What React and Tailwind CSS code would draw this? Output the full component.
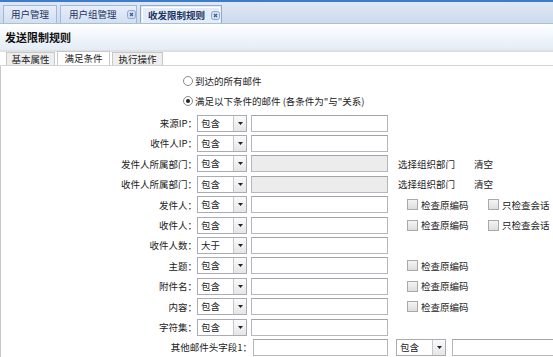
import React from "react";

const rows = [
  { label: "来源IP：", op: "包含" },
  { label: "收件人IP：", op: "包含" },
  { label: "发件人所属部门：", op: "包含", dept: true },
  { label: "收件人所属部门：", op: "包含", dept: true },
  { label: "发件人：", op: "包含", check: true, session: true },
  { label: "收件人：", op: "包含", check: true, session: true },
  { label: "收件人数：", op: "大于" },
  { label: "主题：", op: "包含", check: true },
  { label: "附件名：", op: "包含", check: true },
  { label: "内容：", op: "包含", check: true },
  { label: "字符集：", op: "包含" },
];

function CloseIcon() {
  return (
    <svg width="9" height="9" viewBox="0 0 9 9" className="shrink-0">
      <rect x="0.5" y="0.5" width="8" height="8" rx="2" fill="#d3e0f2" stroke="#8ba7cf" />
      <path d="M3 3 L6 6 M6 3 L3 6" stroke="#3d5f96" strokeWidth="1.2" />
    </svg>
  );
}

function Select({ value }) {
  return (
    <div className="flex h-[17px] w-[50px] shrink-0 border border-[#a9adb3] bg-white">
      <div className="flex-1 pl-[3px] leading-[15px]">{value}</div>
      <div className="flex w-[13px] items-center justify-center border-l border-[#c4c7cc] bg-gradient-to-b from-[#fafafa] to-[#e6e6e6]">
        <svg width="5" height="3" viewBox="0 0 5 3">
          <path d="M0 0 H5 L2.5 3 Z" fill="#222" />
        </svg>
      </div>
    </div>
  );
}

function Input({ disabled, w = "w-[137px]" }) {
  return (
    <div
      className={`h-[17px] ${w} shrink-0 border border-[#b4b7bd] border-t-[#a0a3a8] ${
        disabled ? "bg-[#ececec]" : "bg-white"
      }`}
    />
  );
}

function Checkbox({ text }) {
  return (
    <div className="flex items-center gap-[3px] whitespace-nowrap">
      <div className="h-[11px] w-[11px] border border-[#a9a9a9] bg-gradient-to-b from-[#f4f4f4] to-[#dedede]" />
      <span>{text}</span>
    </div>
  );
}

function Radio({ checked, text }) {
  return (
    <div className="flex h-[20px] items-center pl-[182px] whitespace-nowrap">
      <div className="flex h-[10px] w-[10px] items-center justify-center rounded-full border border-[#8a8a8a] bg-white">
        {checked && <div className="h-[4px] w-[4px] rounded-full bg-[#222]" />}
      </div>
      <span className="ml-[2px]">{text}</span>
    </div>
  );
}

export default function App() {
  return (
    <div className="h-[357px] w-[553px] overflow-hidden whitespace-nowrap bg-white font-['Noto_Sans_CJK_SC',sans-serif] text-[9.5px] text-[#222]">
      {/* top tab bar */}
      <div className="flex h-[24px] items-end gap-[3px] border-t-2 border-b border-t-[#3b7ccc] border-b-[#a8bfdd] bg-gradient-to-b from-[#dfe8f5] to-[#cddbee] pl-[3px]">
        <div className="flex h-[18px] w-[54px] items-center justify-center border border-b-0 border-[#a3b9d7] bg-gradient-to-b from-[#e6eef9] to-[#d3dff0] text-[#1d3563]">
          用户管理
        </div>
        <div className="flex h-[18px] w-[77px] items-center gap-[10px] border border-b-0 border-[#a3b9d7] bg-gradient-to-b from-[#e6eef9] to-[#d3dff0] pl-[8px] text-[#1d3563]">
          <span>用户组管理</span>
          <CloseIcon />
        </div>
        <div className="flex h-[18px] w-[82px] items-center border border-b-0 border-[#8fa9cf] bg-[#e4ecf8] p-[1px]">
          <div className="flex h-full w-full items-center gap-[6px] border border-b-0 border-white pl-[5px] font-bold text-[#1d3563]">
            <span>收发限制规则</span>
            <CloseIcon />
          </div>
        </div>
      </div>

      {/* header */}
      <div className="flex h-[28px] items-center border-b-2 border-[#e0e0e0] bg-gradient-to-b from-white to-[#e3ecf7] px-[5px] text-[11px] font-bold text-[#111]">
        发送限制规则
      </div>

      {/* sub tabs */}
      <div className="flex h-[14px] items-end gap-[2px] border-b border-[#d4d4d4] pl-[6px]">
        <div className="flex h-[13px] w-[49px] items-center justify-center border border-b-0 border-[#c8c8c8] bg-[#eeeeee]">基本属性</div>
        <div className="flex h-[14px] w-[53px] items-center justify-center border border-b-0 border-[#c8c8c8] bg-white">满足条件</div>
        <div className="flex h-[13px] w-[51px] items-center justify-center border border-b-0 border-[#c8c8c8] bg-[#eeeeee]">执行操作</div>
      </div>

      {/* content */}
      <div className="h-full border-l border-[#c9c9c9] pt-[5px]">
        <Radio text="到达的所有邮件" />
        <Radio checked text={'满足以下条件的邮件 (各条件为"与"关系)'} />
        <div className="pt-[2px]">
          {rows.map((r) => (
            <div key={r.label} className="flex h-[20.4px] items-center">
              <div className="w-[196px] shrink-0 text-right">{r.label}</div>
              <Select value={r.op} />
              <div className="ml-[4px]">
                <Input disabled={r.dept} />
              </div>
              {r.dept && (
                <div className="ml-[10px] flex">
                  <span className="w-[76px]">选择组织部门</span>
                  <span>清空</span>
                </div>
              )}
              {r.check && (
                <div className="ml-[19px] w-[81px]">
                  <Checkbox text="检查原编码" />
                </div>
              )}
              {r.session && <Checkbox text="只检查会话" />}
            </div>
          ))}
          <div className="flex h-[20.4px] items-center">
            <div className="w-[251px] shrink-0 text-right">其他邮件头字段1：</div>
            <div className="ml-[1px]">
              <Input w="w-[135px]" />
            </div>
            <div className="ml-[8px]">
              <Select value="包含" />
            </div>
            <div className="ml-[6px]">
              <Input w="w-[110px]" />
            </div>
          </div>
        </div>
      </div>
    </div>
  );
}
